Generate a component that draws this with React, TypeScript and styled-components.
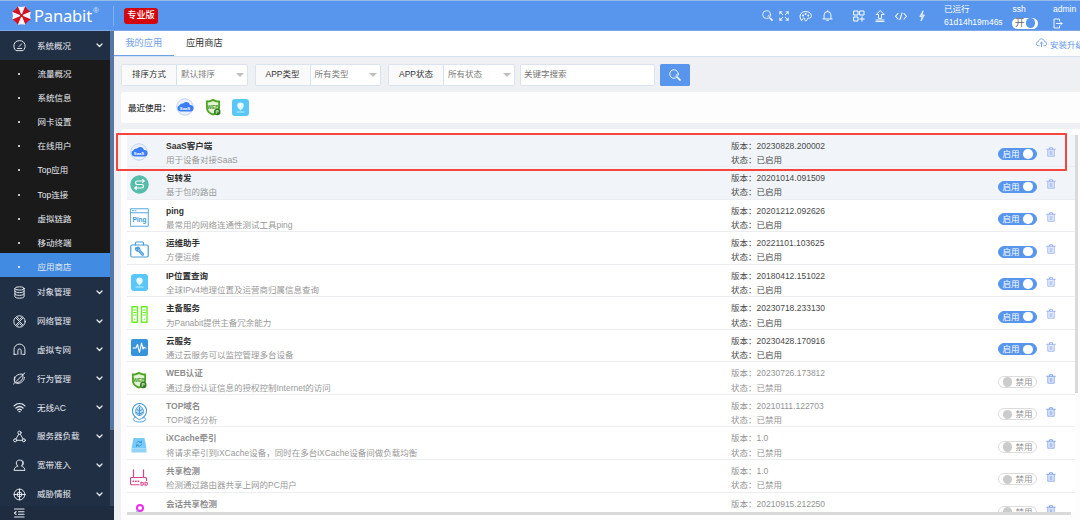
import React from "react";
import styled, { createGlobalStyle } from "styled-components";

const GlobalStyle = createGlobalStyle`
  * { box-sizing: border-box; }
  body {
    margin: 0;
    font-family: "Liberation Sans", "Noto Sans CJK SC", sans-serif;
    font-size: 8.5px;
    color: #333;
    overflow: hidden;
  }
`;

const Page = styled.div`
  width: 1080px;
  height: 520px;
  display: flex;
  flex-direction: column;
  overflow: hidden;
  background: #eff0f4;
`;

/* ---------- header ---------- */
const Header = styled.header`
  flex: none;
  height: 31px;
  display: flex;
  align-items: center;
  background: #5896ee;
  border-top: 1px solid #96bbe8;
  border-bottom: 1px solid #7fa9e6;
  color: #fff;
`;
const Brand = styled.div`
  width: 113px;
  padding-left: 11px;
  display: flex;
  align-items: center;
`;
const BrandName = styled.span`
  margin-left: 2px;
  font: 400 16.5px/20px "Noto Sans", sans-serif;
  letter-spacing: -0.15px;
  white-space: nowrap;
`;
const Registered = styled.span`
  align-self: flex-start;
  font: 8px/9px "Liberation Sans", sans-serif;
  margin-top: 1px;
  margin-left: 1px;
  color: #dbe8fc;
`;
const VLine = styled.i`
  width: 1px;
  height: 20px;
  background: #83b0f2;
`;
const Edition = styled.span`
  margin-left: 10px;
  width: 34px;
  height: 16px;
  border-radius: 3px;
  background: #d4060d;
  font-size: 9.2px;
  font-weight: 500;
  line-height: 15px;
  text-align: center;
`;
const Tools = styled.div`
  margin-left: auto;
  width: 173.5px;
  display: flex;
  align-items: center;
  gap: 10px;
`;
const ExpandShift = styled.span`
  margin-left: -3.5px;
`;
const Stack = styled.div<{ $w: number }>`
  width: ${(p) => p.$w}px;
  height: 26px;
  display: flex;
  flex-direction: column;
  justify-content: space-between;
  line-height: 13px;
  white-space: nowrap;
`;
const Centered = styled.span`
  width: 14px;
  text-align: center;
`;
const Session = styled.div`
  display: flex;
  margin-left: 9px;
  width: 136px;
`;
const MiniSwitch = styled.span`
  width: 26px;
  height: 11px;
  border-radius: 6px;
  background: #fff;
  color: #666;
  display: flex;
  align-items: center;
  justify-content: space-between;
  padding: 0 1px 0 3px;
  font-size: 9.5px;
  line-height: 10px;
  &::after {
    content: "";
    width: 9.5px;
    height: 9.5px;
    margin-right: 2px;
    border-radius: 50%;
    background: #5896ee;
  }
`;

/* ---------- sidebar ---------- */
const Body = styled.div`
  flex: 1;
  min-height: 0;
  display: flex;
`;
const Sidebar = styled.nav`
  flex: none;
  width: 113.5px;
  display: flex;
  flex-direction: column;
  background: #212f45;
  color: #e6eaf0;
`;
const MenuScroll = styled.div`
  flex: none;
  height: 475px;
  display: flex;
  overflow: hidden;
`;
const Menu = styled.div`
  width: 110px;
`;
const Track = styled.div`
  width: 3.5px;
  background: #36445a;
  &::before {
    content: "";
    display: block;
    height: 399px;
    background: #5876a3;
  }
`;
const Group = styled.div`
  height: 28.85px;
  display: flex;
  align-items: center;
  padding: 1px 7px 0 13px;
`;
const GroupLabel = styled.span`
  flex: 1;
  margin-left: 11px;
  line-height: 14px;
`;
const SubMenu = styled.div`
  background: #1a1a1a;
`;
const SubItem = styled.div<{ $active?: boolean }>`
  height: 24.16px;
  display: flex;
  align-items: center;
  padding: 3.6px 0 0 18px;
  line-height: 14px;
  background: ${(p) => (p.$active ? "#418be2" : "transparent")};
  &::before {
    content: "";
    width: 2px;
    height: 2px;
    border-radius: 1px;
    margin-right: 17.5px;
    background: #fff;
  }
`;
const Collapse = styled.div`
  flex: 1;
  padding: 2px 0 0 13px;
  display: flex;
  background: #1f2b3f;
`;

/* ---------- content ---------- */
const Main = styled.main`
  flex: 1;
  min-width: 0;
  display: flex;
  flex-direction: column;
`;
const Tabs = styled.div`
  flex: none;
  height: 26px;
  display: flex;
  background: #fff;
  border-bottom: 1px solid #d5dff0;
`;
const Tab = styled.div<{ $active?: boolean }>`
  width: 60.5px;
  text-align: center;
  font-size: 9.2px;
  line-height: 24px;
  height: 25px;
  color: ${(p) => (p.$active ? "#6f9fe8" : "#333")};
  border-bottom: ${(p) => (p.$active ? "1px solid #6f9fe8" : "0")};
`;
const Upgrade = styled.div`
  margin-left: auto;
  width: 44px;
  display: flex;
  align-items: center;
  gap: 3px;
  color: #6396e6;
  white-space: nowrap;
  overflow: hidden;
  & svg { flex: none; margin-top: -2px; }
`;
const Filters = styled.div`
  flex: none;
  display: flex;
  padding: 7px 0 6px 7.5px;
  height: 34.5px;
`;
const Field = styled.div`
  width: 126.5px;
  height: 21.5px;
  margin-right: 7px;
  display: flex;
  border: 1px solid #dbe3ef;
  border-radius: 2px;
  background: #fff;
  line-height: 19px;
`;
const FieldLabel = styled.span`
  width: 55px;
  background: #fafafa;
  border-right: 1px solid #d5e2f3;
  text-align: center;
`;
const FieldValue = styled.span`
  flex: 1;
  padding: 0 3px 0 4px;
  display: flex;
  align-items: center;
  justify-content: space-between;
  color: #7c7c7c;
  &::after {
    content: "";
    border: 4px solid transparent;
    border-top-color: #c0c0c0;
    border-bottom: 0;
  }
`;
const Keyword = styled.div`
  width: 135.5px;
  height: 21.5px;
  margin-left: -2px;
  padding-left: 3.5px;
  border: 1px solid #dbe3ef;
  border-radius: 2px;
  background: #fff;
  color: #757575;
  line-height: 19px;
`;
const SearchButton = styled.div`
  width: 30px;
  height: 21.5px;
  margin-left: 5px;
  border-radius: 1.5px;
  background: #5896ee;
  color: #fff;
  display: flex;
  align-items: center;
  justify-content: center;
`;
const Recent = styled.div`
  flex: none;
  height: 31.5px;
  margin-left: 7.5px;
  padding-left: 7px;
  border-radius: 3px 0 0 3px;
  background: #fdfdfd;
  display: flex;
  align-items: center;
  font-weight: 500;
  & span { width: 48px; }
  & svg { margin-right: 10px; }
`;
const Card = styled.section`
  flex: 1;
  min-height: 0;
  margin: 6px 0 0 7.5px;
  padding: 5.5px 1.5px 0 6px;
  border-radius: 3px 0 0 0;
  background: #fdfdfd;
  display: flex;
`;
const Scroller = styled.div`
  width: 948px;
  display: flex;
  flex-direction: column;
`;
const List = styled.div`
  height: 377px;
  overflow: hidden;
`;
const HBar = styled.div`
  flex: none;
  width: 944px;
  height: 3.5px;
  background: #dadada;
`;
const VBar = styled.div`
  width: 3px;
  height: 258px;
  background: #dadada;
`;
const Row = styled.div<{ $shade?: boolean; $off?: boolean }>`
  height: 32.55px;
  display: flex;
  border-bottom: 1px solid #ebedf0;
  background: ${(p) => (p.$shade ? "#f1f5f9" : "#fff")};
  color: ${(p) => (p.$off ? "#949494" : "#4a4a4a")};
  line-height: 14.3px;
`;
const RowIcon = styled.div`
  width: 24px;
  height: 35.5px;
  display: flex;
  align-items: center;
  justify-content: center;
`;
const Info = styled.div`
  width: 565px;
  padding: 4px 0 0 15px;
`;
const Name = styled.div<{ $off?: boolean }>`
  font-weight: 700;
  color: ${(p) => (p.$off ? "#8e8e8e" : "#303030")};
`;
const Desc = styled.div`
  color: #999;
`;
const Meta = styled.div`
  width: 282px;
  padding: 4px 0 0 15px;
`;
const Switch = styled.div<{ $on: boolean }>`
  width: 39px;
  height: 12px;
  margin-top: 13.5px;
  padding: 0 3.5px;
  border-radius: 6px;
  border: 1px solid ${(p) => (p.$on ? "#5896ee" : "#dcdcdc")};
  background: ${(p) => (p.$on ? "#5896ee" : "#fff")};
  color: ${(p) => (p.$on ? "#fff" : "#909090")};
  display: flex;
  flex-direction: ${(p) => (p.$on ? "row" : "row-reverse")};
  align-items: center;
  justify-content: space-between;
  line-height: 10px;
  &::after {
    content: "";
    width: 9.5px;
    height: 9.5px;
    border-radius: 50%;
    background: ${(p) => (p.$on ? "#fff" : "#cbcbcb")};
  }
`;
const Remove = styled.div<{ $off?: boolean }>`
  margin: 12px 0 0 8.5px;
  color: ${(p) => (p.$off ? "#83a4f0" : "#9bb4f2")};
`;
const Highlight = styled.div`
  position: absolute;
  left: 116px;
  top: 133px;
  width: 951px;
  height: 38px;
  border: 2px solid #f8453c;
  border-radius: 1px;
`;

/* ---------- icons ---------- */
const Glyph = styled.svg`
  display: block;
  flex: none;
  fill: none;
  stroke: currentColor;
  stroke-linecap: round;
  stroke-linejoin: round;
`;
type IconProps = { w: number; h?: number; box?: string; sw?: number; children: React.ReactNode };
const Icon = ({ w, h = w, box = "0 0 24 24", sw = 1.8, children }: IconProps) => (
  <Glyph width={w} height={h} viewBox={box} strokeWidth={sw}>
    {children}
  </Glyph>
);

const SearchIcon = ({ w = 11 }: { w?: number }) => (
  <Icon w={w}>
    <circle cx="10" cy="10" r="8.5" />
    <path d="M13 14.5a5 5 0 0 0 2-3M16 16l1.5 1.5" />
    <path d="M18 18l4 4" strokeWidth="3.4" />
  </Icon>
);
const Chevron = () => (
  <Icon w={7} h={5} box="0 0 7 5" sw={1.3}>
    <path d="M1 1l2.5 2.5L6 1" />
  </Icon>
);
const Trash = () => (
  <Icon w={10} box="0 0 20 20" sw={1.6}>
    <path d="M1.5 4.5h17M7 4V1.5h6V4" strokeWidth="2" />
    <path d="M3.5 5.5v13h13v-13" fill="currentColor" fillOpacity=".25" />
    <path d="M8.5 9v6M11.5 9v6" />
  </Icon>
);
const Logo = () => (
  <Icon w={21} box="0 0 42 42" sw={0}>
    {[0, 45, 90, 135, 180, 225, 270, 315].map((a, i) => (
      <path
        key={a}
        transform={`rotate(${a} 21 21)`}
        d="M21 21L13 2.500Q21 5 29 2.500z"
        fill={i % 2 ? "#d8101c" : "#fbf4f6"}
      />
    ))}
    <circle cx="21" cy="21" r="3" fill="#d8101c" />
  </Icon>
);

const ExpandIcon = () => (
  <Icon w={10} sw={2.2}>
    <path d="M2 7V2h5M2 2l7 7M17 2h5v5M22 2l-7 7M2 17v5h5M2 22l7-7M22 17v5h-5M22 22l-7-7" />
  </Icon>
);
const PaletteIcon = () => (
  <Icon w={13} h={12} box="0 0 26 24" sw={2}>
    <path d="M5 20.500C-1 15 2 3 13 3c10 0 14 8 10.500 12-2 2-4 .5-6 1.500-2.500 1.500 0 4-3 5-2.500.5-3-1.500-3-3.500 0-2.500-2.500-2.500-4-.5-1 1.500-.5 3-2.500 3z" />
    <g fill="currentColor" stroke="none"><circle cx="8" cy="11" r="1.900" /><circle cx="13" cy="8" r="1.900" /><circle cx="18.500" cy="11" r="1.900" /></g>
  </Icon>
);
const BellIcon = () => (
  <Icon w={11} sw={2}>
    <path d="M2 19.500h20M4.500 19V11a7.500 7.500 0 0 1 15 0v8M12 3.500V1.500M10 22.500h4" />
  </Icon>
);
const AppsIcon = () => (
  <Icon w={12} sw={2}>
    <path d="M2 2h8v8H2zM14 2h8v8h-8zM2 14h8v8H2zM18 13.500v9M13.500 18h9" />
  </Icon>
);
const UploadIcon = () => (
  <Icon w={10} h={12} box="0 0 20 24" sw={1.8}>
    <path d="M10 1.500L2.500 9H7v8h6V9h4.500zM2 20h16M2 23h16" />
  </Icon>
);
const CodeIcon = () => (
  <Icon w={12} sw={2.2}>
    <path d="M6 7l-5 5.500L6 18M18 7l5 5.500L18 18M14 6l-4 13" />
  </Icon>
);
const BoltIcon = () => (
  <Icon w={10} h={12} box="0 0 20 24" sw={1.4}>
    <path d="M12 2L5.500 13H10L8 22l7-12h-4.500z" fill="currentColor" fillOpacity=".6" />
  </Icon>
);
const LogoutIcon = () => (
  <Icon w={10} h={11} box="0 0 20 22" sw={1.8}>
    <path d="M13 6V2H2v18h11v-4M7 11h11M15 8l3 3-3 3" />
  </Icon>
);
const CloudUp = () => (
  <Icon w={11} h={10} box="0 0 24 22">
    <path d="M7 17H5.500a4.500 4.500 0 0 1-.5-9C6 4 9 2 12 2s6 2 7 6a4.500 4.500 0 0 1-.5 9H17M12 19V9M9 12l3-3 3 3" />
  </Icon>
);

const menuIcons: Record<string, React.ReactNode> = {
  gauge: <><path d="M5 21c-6-5-4.500-18 7-18s13 13 7 18z" /><path d="M11 14l5-5M8 17.500h8" /></>,
  db: <><ellipse cx="12" cy="4.500" rx="8.500" ry="3" /><path d="M3.500 4.500v15c0 4 17 4 17 0v-15M3.500 9.500c0 4 17 4 17 0M3.500 14.500c0 4 17 4 17 0" /></>,
  net: <><circle cx="12" cy="12" r="10.500" /><path d="M6 6l12 12M18 6L6 18M8 4.500l4 4 4-4M8 19.500l4-4 4 4" /></>,
  vpn: <><path d="M2 21V12a10 10 0 0 1 20 0v9h-4M2 21h4" /><path d="M9 21v-7a3 3 0 0 1 6 0v7" /></>,
  act: <><path d="M3 15C2 8 9 3 18 4c2 8-3 15-11 15.500M1 22L22 1.500M3 9c-2 9 0 12 6 12s12-5 12-11" /></>,
  wifi: <><path d="M2 9c6-5.500 14-5.500 20 0M5.500 13c4-3.500 9-3.500 13 0M8.500 16.500c2-1.800 5-1.800 7 0M11 19.500h2" strokeWidth="2.400" /></>,
  lb: <><circle cx="12" cy="5" r="3" /><circle cx="4" cy="19" r="2.800" /><circle cx="20" cy="19" r="2.800" /><path d="M10.500 8L5.500 16.500M13.500 8l5 8.500M7 19h10" /></>,
  user: <><path d="M8.500 13C4 8 6 2 12 2s8 6 3.500 11c3 1.500 6.500 3 6.500 8H2c0-5 3.500-6.500 6.500-8z" /><path d="M16 2.500c4 1 4 6 2 9" /></>,
  intel: <><circle cx="12" cy="12" r="10" /><circle cx="12" cy="12" r="4.500" /><path d="M12 2v20M2 12h20" /></>,
};

const SaasIcon = () => (
  <Icon w={18} box="0 0 36 36" sw={0}>
    <circle cx="18" cy="18" r="16.500" fill="#e8f0ff" stroke="#bfd4fb" strokeWidth="2" />
    <path d="M9 27a6.500 6.500 0 0 1-2-12.500A6.500 6.500 0 0 1 14 11a8 8 0 0 1 14 3 6.500 6.500 0 0 1 1 13z" fill="#3a7df6" />
    <text x="18" y="23.500" fill="#fff" fontSize="8.500" fontWeight="700" textAnchor="middle">SaaS</text>
  </Icon>
);
const WebIcon = () => (
  <Icon w={18} box="0 0 36 36" sw={0}>
    <path d="M18 1.500c4 3 9 4 14 3.500v14c0 8-6 13-14 16C10 32 4 27 4 19V5c5 .5 10-.5 14-3.500z" fill="#4fa522" />
    <path d="M18 6c3 2 7 3 10.500 2.800V19c0 6-4 9.500-10.500 12C11.500 28.500 7.500 25 7.500 19V8.800C11 9 15 8 18 6z" fill="#e3f3d8" />
    <text x="18" y="21.500" fill="#3d961b" fontSize="10" fontWeight="700" textAnchor="middle">WEB</text>
    <circle cx="26.500" cy="28" r="6.500" fill="#2f7d1e" />
    <path d="M24.500 31v-6h4v3h-4" stroke="#d8f0c8" strokeWidth="1.500" />
  </Icon>
);
const PinIcon = () => (
  <Icon w={17} box="0 0 34 34" sw={0}>
    <rect width="34" height="34" rx="6" fill="#58c8fb" />
    <path d="M17 7a6.500 6.500 0 0 1 6.500 6.500c0 4-3.500 6-6.500 9.500-3-3.500-6.500-5.500-6.500-9.500A6.500 6.500 0 0 1 17 7z" fill="#e9f9ff" />
    <path d="M10 26h14" stroke="#c4ecff" strokeWidth="2" />
  </Icon>
);

const appIcons: Record<string, React.ReactNode> = {
  saas: <SaasIcon />,
  fwd: (
    <Icon w={19} box="0 0 38 38" sw={2.4}>
      <circle cx="19" cy="19" r="18.500" fill="#55bda9" stroke="none" />
      <g stroke="#fff"><path d="M28 12H14.500a3.500 3.500 0 0 0 0 7h9a3.500 3.500 0 0 1 0 7H10M25 9l3.500 3-3.500 3M13 23l-3.500 3 3.500 3" /></g>
    </Icon>
  ),
  ping: (
    <Icon w={19} box="0 0 38 38" sw={2}>
      <g stroke="#55a8e0"><path d="M1.500 1.500h35v35h-35zM1.500 9.500h35M5 5.500h2M10 5.500h2" /></g>
      <text x="19" y="27" fill="#3c98dc" stroke="none" fontSize="13" fontWeight="700" textAnchor="middle">Ping</text>
    </Icon>
  ),
  ops: (
    <Icon w={19} h={17} box="0 0 38 34" sw={2.4}>
      <g stroke="#4a9fdc">
        <rect x="1.500" y="8" width="35" height="24" rx="3" />
        <path d="M11 8V4c0-1 1-2 2-2h12c1 0 2 1 2 2v4" />
        <path d="M12 13a4.500 4.500 0 0 0 5 7l7 8c2 1.500 4-1 2.500-2.500l-7-7c1-4-2-7-5-6l2.500 3-2 2z" />
      </g>
    </Icon>
  ),
  pin: <PinIcon />,
  ha: (
    <Icon w={17} box="0 0 34 34" sw={2.8}>
      <g stroke="#66f01f">
        <path d="M2 1.500h11v31H2zM21 1.500h11v31H21z" />
        <path d="M5.500 8h4.500M5.500 13h4.500M5.500 18h4.500M7.500 26v1M24.500 8H29M24.500 13H29M24.500 18H29M26.500 26v1" strokeWidth="2.200" />
      </g>
    </Icon>
  ),
  cloud: (
    <Icon w={17} box="0 0 34 34" sw={2.2}>
      <rect width="34" height="34" rx="4" fill="#3694dd" stroke="none" />
      <path d="M4 18h6l3-7 4 16 4-19 3 12 2-4 1.500 2H30" stroke="#fff" />
    </Icon>
  ),
  web: <WebIcon />,
  top: (
    <Icon w={17} h={20} box="0 0 34 40" sw={2.2}>
      <g stroke="#4899d8">
        <path d="M10 29C4 25 3 20 3 15a14 14 0 0 1 28 0c0 5-1 10-7 14" />
        <path d="M17 5c5 3 8 7 8 12s-4 8-8 8-8-3-8-8 3-9 8-12z" strokeWidth="1.800" fill="#bfdcf3" />
        <path d="M17 9v16M12 13l5 3 5-3M10.500 19l6.500 3 6.500-3" strokeWidth="2" />
        <path d="M8 29c-8 4-1 9 9 9s17-5 9-9l-9 4z" strokeWidth="1.800" />
      </g>
    </Icon>
  ),
  cache: (
    <Icon w={16} h={15} box="0 0 32 30" sw={2}>
      <path d="M5 0h22l4 21H1z" fill="#76cafa" stroke="none" />
      <path d="M1 21h30v8H1z" fill="#92d2f7" stroke="none" />
      <g stroke="#3592d8"><path d="M11 10c2-4 7-4 10-1M21 6v3h-4M21 13c-2 4-7 4-10 1M11 17v-3h4" strokeWidth="1.700" /></g>
    </Icon>
  ),
  router: (
    <Icon w={18} h={17} box="0 0 36 34" sw={2.4}>
      <g stroke="#d6458f">
        <path d="M18 31.500H3c-1 0-2-1-2-2V19c0-1 1-2 2-2h28c1 0 2 1 2 2v4M7 16V1.500M27 16V1.500" />
        <path d="M6 24.500h1.500M11 24.500h1.500M16 24.500h1.500" strokeWidth="2.600" />
        <path d="M22 26.500h2.500c3 0 3 6 0 6H22zM30 26.500h2.500c3 0 3 6 0 6H30z" strokeWidth="2.200" />
      </g>
    </Icon>
  ),
  talk: (
    <Icon w={10} h={18} box="0 0 20 36" sw={4}>
      <circle cx="12" cy="14" r="6" stroke="#ee2ceb" />
      <path d="M7 20l-5 7" stroke="#6cc8ee" strokeWidth="3" />
    </Icon>
  ),
};

/* ---------- data ---------- */
const subItems = ["流量概况", "系统信息", "网卡设置", "在线用户", "Top应用", "Top连接", "虚拟链路", "移动终端", "应用商店"];
const groups: [string, string][] = [
  ["db", "对象管理"], ["net", "网络管理"], ["vpn", "虚拟专网"], ["act", "行为管理"],
  ["wifi", "无线AC"], ["lb", "服务器负载"], ["user", "宽带准入"], ["intel", "威胁情报"],
];
const filters = [["排序方式", "默认排序"], ["APP类型", "所有类型"], ["APP状态", "所有状态"]];
const apps: [string, string, string, string, boolean][] = [
  ["saas", "SaaS客户端", "用于设备对接SaaS", "20230828.200002", true],
  ["fwd", "包转发", "基于包的路由", "20201014.091509", true],
  ["ping", "ping", "最常用的网络连通性测试工具ping", "20201212.092626", true],
  ["ops", "运维助手", "方便运维", "20221101.103625", true],
  ["pin", "IP位置查询", "全球IPv4地理位置及运营商归属信息查询", "20180412.151022", true],
  ["ha", "主备服务", "为Panabit提供主备冗余能力", "20230718.233130", true],
  ["cloud", "云服务", "通过云服务可以监控管理多台设备", "20230428.170916", true],
  ["web", "WEB认证", "通过身份认证信息的授权控制Internet的访问", "20230726.173812", false],
  ["top", "TOP域名", "TOP域名分析", "20210111.122703", false],
  ["cache", "iXCache牵引", "将请求牵引到iXCache设备，同时在多台iXCache设备间做负载均衡", "1.0", false],
  ["router", "共享检测", "检测通过路由器共享上网的PC用户", "1.0", false],
  ["talk", "会话共享检测", "", "20210915.212250", false],
];

const MenuGroup = ({ icon, label }: { icon: string; label: string }) => (
  <Group>
    <Icon w={13}>{menuIcons[icon]}</Icon>
    <GroupLabel>{label}</GroupLabel>
    <Chevron />
  </Group>
);

export default function App() {
  return (
    <Page>
      <GlobalStyle />
      <Header>
        <Brand>
          <Logo />
          <BrandName>Panabit</BrandName>
          <Registered>®</Registered>
        </Brand>
        <VLine />
        <Edition>专业版</Edition>
        <Tools>
          <SearchIcon />
          <ExpandShift><ExpandIcon /></ExpandShift>
          <PaletteIcon />
          <BellIcon />
          <VLine />
          <AppsIcon />
          <UploadIcon />
          <CodeIcon />
          <BoltIcon />
          <VLine />
        </Tools>
        <Session>
          <Stack $w={68}><span>已运行</span><span>61d14h19m46s</span></Stack>
          <Stack $w={41}><Centered>ssh</Centered><MiniSwitch>开</MiniSwitch></Stack>
          <Stack $w={27}><span>admin</span><LogoutIcon /></Stack>
        </Session>
      </Header>
      <Body>
        <Sidebar>
          <MenuScroll>
            <Menu>
              <MenuGroup icon="gauge" label="系统概况" />
              <SubMenu>
                {subItems.map((s, i) => (
                  <SubItem key={s} $active={i === subItems.length - 1}>{s}</SubItem>
                ))}
              </SubMenu>
              {groups.map(([icon, label]) => (
                <MenuGroup key={label} icon={icon} label={label} />
              ))}
            </Menu>
            <Track />
          </MenuScroll>
          <Collapse>
            <Icon w={12} h={10} box="0 0 24 20" sw={2.4}>
              <path d="M3 2h19M11 7.500h11M11 12.500h11M3 18h19M6 7.500L3 10l3 2.500" />
            </Icon>
          </Collapse>
        </Sidebar>
        <Main>
          <Tabs>
            <Tab $active>我的应用</Tab>
            <Tab>应用商店</Tab>
            <Upgrade><CloudUp />安装升级</Upgrade>
          </Tabs>
          <Filters>
            {filters.map(([label, value]) => (
              <Field key={label}>
                <FieldLabel>{label}</FieldLabel>
                <FieldValue>{value}</FieldValue>
              </Field>
            ))}
            <Keyword>关键字搜索</Keyword>
            <SearchButton><SearchIcon w={12} /></SearchButton>
          </Filters>
          <Recent>
            <span>最近使用：</span>
            <SaasIcon />
            <WebIcon />
            <PinIcon />
          </Recent>
          <Card>
            <Scroller>
              <List>
                {apps.map(([icon, name, desc, version, on], i) => (
                  <Row key={name} $shade={i < 2} $off={!on}>
                    <RowIcon>{appIcons[icon]}</RowIcon>
                    <Info>
                      <Name $off={!on}>{name}</Name>
                      <Desc>{desc}</Desc>
                    </Info>
                    <Meta>
                      <div>版本：{version}</div>
                      {i < apps.length - 1 && <div>状态：{on ? "已启用" : "已禁用"}</div>}
                    </Meta>
                    <Switch $on={on}>{on ? "启用" : "禁用"}</Switch>
                    <Remove $off={!on}><Trash /></Remove>
                  </Row>
                ))}
              </List>
              <HBar />
            </Scroller>
            <VBar />
          </Card>
        </Main>
      </Body>
      <Highlight />
    </Page>
  );
}
